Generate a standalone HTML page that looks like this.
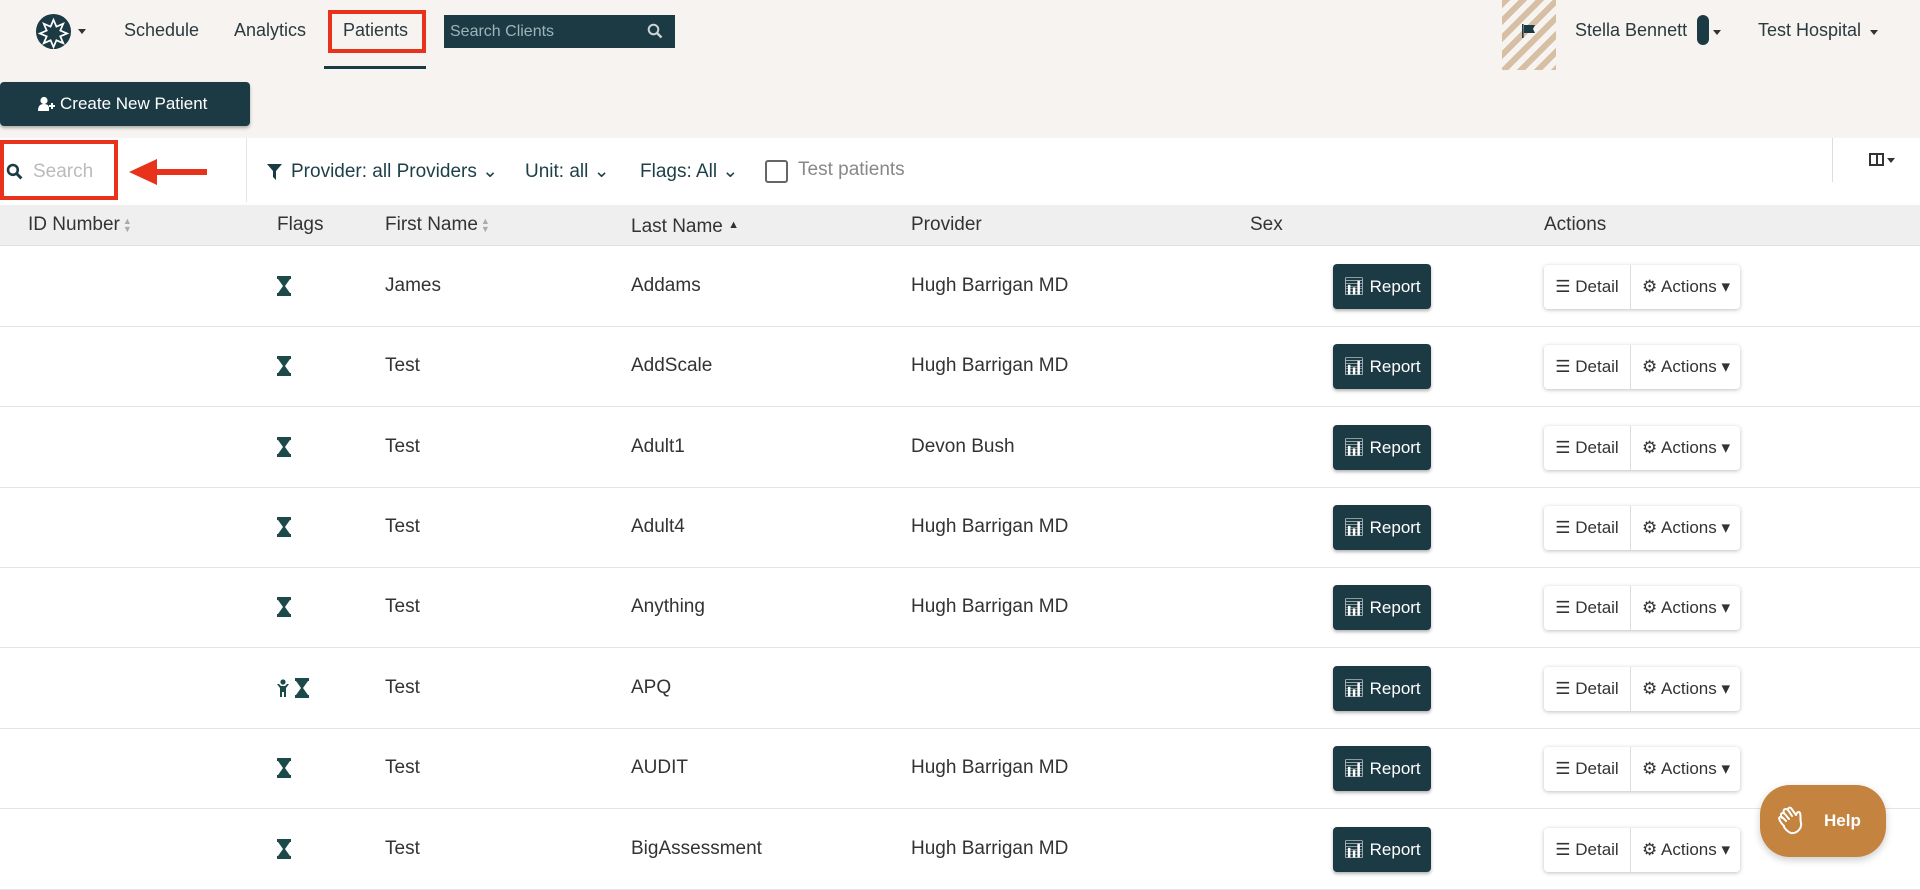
<!DOCTYPE html>
<html><head><meta charset="utf-8"><style>
*{box-sizing:border-box;margin:0;padding:0}
body{width:1920px;height:887px;overflow:hidden;background:#fff;font-family:"Liberation Sans",sans-serif;color:#333;position:relative}
.a{position:absolute}
.top{left:0;top:0;width:1920px;height:138px;background:#f6f3f0}
.nav{font-size:18px;color:#2a3a3f;top:20px}
.teal{color:#1d3f48}
.row{position:absolute;left:0;width:1920px;height:81px;border-bottom:1px solid #e4e4e4}
.row .t{position:absolute;top:0;line-height:80px;font-size:19px;color:#333}
.rep{position:absolute;left:1333px;top:18px;width:98px;height:45px;background:#1c3a44;border-radius:4px;color:#fff;font-size:17px;line-height:45px;text-align:center;box-shadow:0 2px 3px rgba(0,0,0,.3)}
.grp{position:absolute;left:1544px;top:19px;width:196px;height:44px;background:#fff;border-radius:4px;box-shadow:0 1px 4px rgba(0,0,0,.25);font-size:17px;line-height:44px}
.grp .d{position:absolute;left:0;width:87px;text-align:center;border-right:1px solid #ddd;height:44px}
.grp .ac{position:absolute;left:88px;width:108px;text-align:center}
.hg{position:absolute;top:30px;width:14px;height:20px}
.srt{display:inline-block;vertical-align:middle;margin-left:3px;font-size:9px;line-height:8px;color:#aaa}
</style></head><body>
<div class="a top"></div>
<svg class="a" style="left:35px;top:13px" width="37" height="37" viewBox="0 0 38 38"><circle cx="19" cy="19" r="18" fill="#1c3a44"/><path d="M19 7l3 7 7-3-3 7 7 3-7 3 3 7-7-3-3 7-3-7-7 3 3-7-7-3 7-3-3-7 7 3z" fill="none" stroke="#fff" stroke-width="1.8"/></svg>
<div class="a" style="left:78px;top:29px;border:4px solid transparent;border-top:5px solid #333"></div>
<div class="a nav" style="left:124px">Schedule</div>
<div class="a nav" style="left:234px">Analytics</div>
<div class="a nav" style="left:343px">Patients</div>
<div class="a" style="left:328px;top:10px;width:98px;height:43px;border:4px solid #e8321c"></div>
<div class="a" style="left:324px;top:66px;width:102px;height:3px;background:#1c3a44"></div>
<div class="a" style="left:444px;top:15px;width:231px;height:33px;background:#1c3a44;color:#9fb3b8;font-size:16px;line-height:33px;padding-left:6px">Search Clients</div>
<svg class="a" style="left:647px;top:23px" width="16" height="16" viewBox="0 0 16 16"><circle cx="6.5" cy="6.5" r="4.8" fill="none" stroke="#c9d3d6" stroke-width="2"/><path d="M10 10l4.5 4.5" stroke="#c9d3d6" stroke-width="2.4"/></svg>
<div class="a" style="left:1502px;top:0;width:54px;height:70px;background:repeating-linear-gradient(135deg,#d6bfa3 0 6px,#f6f3f0 6px 12px)"></div>
<svg class="a" style="left:1521px;top:23px" width="16" height="16" viewBox="0 0 16 16"><rect x="1" y="1" width="1.6" height="14" fill="#1c3a44"/><path d="M3 2h11l-2 4 2 4H3z" fill="#1c3a44"/></svg>
<div class="a nav" style="left:1575px">Stella Bennett</div>
<div class="a" style="left:1697px;top:15px;width:12px;height:30px;border-radius:6px;background:#1c3a44"></div>
<div class="a" style="left:1713px;top:30px;border:4px solid transparent;border-top:5px solid #333"></div>
<div class="a nav" style="left:1758px">Test Hospital</div>
<div class="a" style="left:1870px;top:30px;border:4px solid transparent;border-top:5px solid #333"></div>
<div class="a" style="left:0;top:82px;width:250px;height:44px;background:#1c3a44;border-radius:4px;color:#fff;font-size:17px;line-height:44px;padding-left:60px;box-shadow:0 2px 3px rgba(0,0,0,.3)">Create New Patient</div>
<svg class="a" style="left:37px;top:96px" width="19" height="16" viewBox="0 0 17 16"><circle cx="6" cy="4.5" r="3.6" fill="#fff"/><path d="M0 15c0-5 2-7 6-7s5 2 5 4v3z" fill="#fff"/><path d="M11 10h6M14 7v6" stroke="#fff" stroke-width="2"/></svg>
<div class="a" style="left:0;top:140px;width:118px;height:60px;border:4px solid #e8321c"></div>
<svg class="a" style="left:6px;top:163px" width="17" height="17" viewBox="0 0 16 16"><circle cx="6.5" cy="6.5" r="4.6" fill="none" stroke="#1c3a44" stroke-width="2.4"/><path d="M10 10l4.5 4.5" stroke="#1c3a44" stroke-width="2.8"/></svg>
<div class="a" style="left:33px;top:161px;font-size:19px;color:#bbb">Search</div>
<svg class="a" style="left:129px;top:157px" width="78" height="30" viewBox="0 0 78 30"><path d="M0 15L28 2v10h50v6H28v10z" fill="#e8321c"/></svg>
<div class="a" style="left:246px;top:138px;width:1px;height:64px;background:#e6e6e6"></div>
<svg class="a" style="left:267px;top:164px" width="15" height="16" viewBox="0 0 15 16"><path d="M0 0h15L9 7v9L6 13V7z" fill="#1c3a44"/></svg>
<div class="a teal" style="left:291px;top:160px;font-size:19px">Provider: all Providers ⌄</div>
<div class="a teal" style="left:525px;top:160px;font-size:19px">Unit: all ⌄</div>
<div class="a teal" style="left:640px;top:160px;font-size:19px">Flags: All ⌄</div>
<div class="a" style="left:765px;top:160px;width:23px;height:23px;border:2px solid #666;border-radius:3px"></div>
<div class="a" style="left:798px;top:159px;font-size:19px;color:#888">Test patients</div>
<div class="a" style="left:1832px;top:138px;width:1px;height:44px;background:#ddd"></div>
<div class="a" style="left:1869px;top:153px;width:15px;height:13px;border:2px solid #333"></div>
<div class="a" style="left:1876px;top:153px;width:2px;height:13px;background:#333"></div>
<div class="a" style="left:1887px;top:158px;border:4px solid transparent;border-top:5px solid #333"></div>
<div class="a" style="left:0;top:205px;width:1920px;height:41px;background:#efefef;border-bottom:1px solid #e0e0e0;font-size:19px;line-height:40px;color:#333">
<span class="a" style="left:28px">ID Number<span class="srt">▲<br>▼</span></span>
<span class="a" style="left:277px">Flags</span>
<span class="a" style="left:385px">First Name<span class="srt">▲<br>▼</span></span>
<span class="a" style="left:631px">Last Name <span style="font-size:11px;vertical-align:4px">▲</span></span>
<span class="a" style="left:911px">Provider</span>
<span class="a" style="left:1250px">Sex</span>
<span class="a" style="left:1544px">Actions</span>
</div>
<div class="row" style="top:246px"><svg class="hg" style="left:277px" viewBox="0 0 14 20"><path d="M0 0h14v3h-1L8 10l5 7h1v3H0v-3h1l5-7-5-7H0z" fill="#1c4a4a"/></svg><span class="t" style="left:385px">James</span><span class="t" style="left:631px">Addams</span><span class="t" style="left:911px">Hugh Barrigan MD</span><div class="rep">📊︎ Report</div><div class="grp"><span class="d">☰ Detail</span><span class="ac">⚙ Actions ▾</span></div></div>
<div class="row" style="top:326px"><svg class="hg" style="left:277px" viewBox="0 0 14 20"><path d="M0 0h14v3h-1L8 10l5 7h1v3H0v-3h1l5-7-5-7H0z" fill="#1c4a4a"/></svg><span class="t" style="left:385px">Test</span><span class="t" style="left:631px">AddScale</span><span class="t" style="left:911px">Hugh Barrigan MD</span><div class="rep">📊︎ Report</div><div class="grp"><span class="d">☰ Detail</span><span class="ac">⚙ Actions ▾</span></div></div>
<div class="row" style="top:407px"><svg class="hg" style="left:277px" viewBox="0 0 14 20"><path d="M0 0h14v3h-1L8 10l5 7h1v3H0v-3h1l5-7-5-7H0z" fill="#1c4a4a"/></svg><span class="t" style="left:385px">Test</span><span class="t" style="left:631px">Adult1</span><span class="t" style="left:911px">Devon Bush</span><div class="rep">📊︎ Report</div><div class="grp"><span class="d">☰ Detail</span><span class="ac">⚙ Actions ▾</span></div></div>
<div class="row" style="top:487px"><svg class="hg" style="left:277px" viewBox="0 0 14 20"><path d="M0 0h14v3h-1L8 10l5 7h1v3H0v-3h1l5-7-5-7H0z" fill="#1c4a4a"/></svg><span class="t" style="left:385px">Test</span><span class="t" style="left:631px">Adult4</span><span class="t" style="left:911px">Hugh Barrigan MD</span><div class="rep">📊︎ Report</div><div class="grp"><span class="d">☰ Detail</span><span class="ac">⚙ Actions ▾</span></div></div>
<div class="row" style="top:567px"><svg class="hg" style="left:277px" viewBox="0 0 14 20"><path d="M0 0h14v3h-1L8 10l5 7h1v3H0v-3h1l5-7-5-7H0z" fill="#1c4a4a"/></svg><span class="t" style="left:385px">Test</span><span class="t" style="left:631px">Anything</span><span class="t" style="left:911px">Hugh Barrigan MD</span><div class="rep">📊︎ Report</div><div class="grp"><span class="d">☰ Detail</span><span class="ac">⚙ Actions ▾</span></div></div>
<div class="row" style="top:648px"><svg class="a" style="left:277px;top:31px" width="12" height="18" viewBox="0 0 12 18"><circle cx="6" cy="3" r="2.6" fill="#1c4a4a"/><path d="M0 5h2l2 2h4l2-2h2L9 9v9H7v-5H5v5H3V9z" fill="#1c4a4a"/></svg><svg class="hg" style="left:295px" viewBox="0 0 14 20"><path d="M0 0h14v3h-1L8 10l5 7h1v3H0v-3h1l5-7-5-7H0z" fill="#1c4a4a"/></svg><span class="t" style="left:385px">Test</span><span class="t" style="left:631px">APQ</span><div class="rep">📊︎ Report</div><div class="grp"><span class="d">☰ Detail</span><span class="ac">⚙ Actions ▾</span></div></div>
<div class="row" style="top:728px"><svg class="hg" style="left:277px" viewBox="0 0 14 20"><path d="M0 0h14v3h-1L8 10l5 7h1v3H0v-3h1l5-7-5-7H0z" fill="#1c4a4a"/></svg><span class="t" style="left:385px">Test</span><span class="t" style="left:631px">AUDIT</span><span class="t" style="left:911px">Hugh Barrigan MD</span><div class="rep">📊︎ Report</div><div class="grp"><span class="d">☰ Detail</span><span class="ac">⚙ Actions ▾</span></div></div>
<div class="row" style="top:809px"><svg class="hg" style="left:277px" viewBox="0 0 14 20"><path d="M0 0h14v3h-1L8 10l5 7h1v3H0v-3h1l5-7-5-7H0z" fill="#1c4a4a"/></svg><span class="t" style="left:385px">Test</span><span class="t" style="left:631px">BigAssessment</span><span class="t" style="left:911px">Hugh Barrigan MD</span><div class="rep">📊︎ Report</div><div class="grp"><span class="d">☰ Detail</span><span class="ac">⚙ Actions ▾</span></div></div>
<div class="a" style="left:1760px;top:785px;width:126px;height:72px;border-radius:30px;background:#c4843f;box-shadow:0 3px 8px rgba(0,0,0,.2);color:#fff;font-weight:bold;font-size:17px;line-height:72px;padding-left:64px">Help</div>
<svg class="a" style="left:1776px;top:804px" width="34" height="34" viewBox="0 0 34 34"><path d="M8 22c-4-4-6-8-4-9 2-1 4 2 6 4M6 14c-2-3-1-5 1-5 2 0 4 4 6 6M8 9c-1-3 0-4 2-4s4 4 6 7M12 6c0-2 1-3 3-2l5 7M20 11c1-3 3-4 4-2 1 3 0 7 1 10 1 5-4 11-10 10-3-1-5-3-7-6" fill="none" stroke="#fff" stroke-width="2" stroke-linecap="round"/></svg>
</body></html>
